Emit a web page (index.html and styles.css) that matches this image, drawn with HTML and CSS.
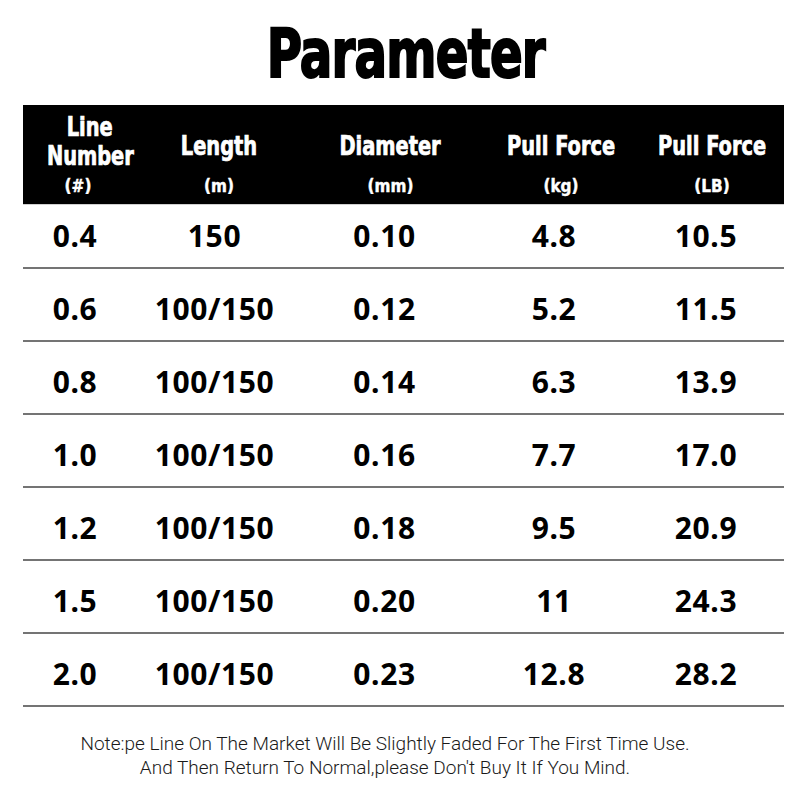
FILE: index.html
```html
<!DOCTYPE html>
<html>
<head>
<meta charset="utf-8">
<link rel="stylesheet" href="styles.css">
</head>
<body>
<div class="page">
  <div class="title-wrap"><h1 class="title">Parameter</h1></div>
  <div class="table">
    <div class="thead">
      <div class="th th1">
        <span class="hl">Line</span>
        <span class="hl hl-mid">Number</span>
        <span class="unit unit1">(#)</span>
      </div>
      <div class="th th2"><span class="hl hl-solo">Length</span><span class="unit">(m)</span></div>
      <div class="th th3"><span class="hl hl-solo">Diameter</span><span class="unit">(mm)</span></div>
      <div class="th th4"><span class="hl hl-solo">Pull Force</span><span class="unit">(kg)</span></div>
      <div class="th th5"><span class="hl hl-solo">Pull Force</span><span class="unit">(LB)</span></div>
    </div>
    <div class="row first"><span>0.4</span><span>150</span><span>0.10</span><span>4.8</span><span>10.5</span></div>
    <div class="row"><span>0.6</span><span>100/150</span><span>0.12</span><span>5.2</span><span>11.5</span></div>
    <div class="row"><span>0.8</span><span>100/150</span><span>0.14</span><span>6.3</span><span>13.9</span></div>
    <div class="row"><span>1.0</span><span>100/150</span><span>0.16</span><span>7.7</span><span>17.0</span></div>
    <div class="row"><span>1.2</span><span>100/150</span><span>0.18</span><span>9.5</span><span>20.9</span></div>
    <div class="row"><span>1.5</span><span>100/150</span><span>0.20</span><span>11</span><span>24.3</span></div>
    <div class="row"><span>2.0</span><span>100/150</span><span>0.23</span><span>12.8</span><span>28.2</span></div>
  </div>
  <div class="note">
    <p>Note:pe Line On The Market Will Be Slightly Faded For The First Time Use.</p>
    <p>And Then Return To Normal,please Don't Buy It If You Mind.</p>
  </div>
</div>
</body>
</html>
```

FILE: styles.css
```css
html, body {
  margin: 0;
  padding: 0;
  background: #fff;
}
.page {
  width: 800px;
  height: 800px;
  overflow: hidden;
  color: #000;
}
.title-wrap {
  padding-top: 21px;
  padding-bottom: 17px;
  text-align: center;
}
.title {
  margin: 0;
  display: inline-block;
  font-family: "DejaVu Sans Condensed", "DejaVu Sans", sans-serif;
  font-weight: 700;
  font-size: 67px;
  line-height: 67px;
  letter-spacing: -1px;
  -webkit-text-stroke: 2px #000;
  transform: scaleX(0.8);
  margin-left: 12px;
}
.table {
  margin-left: 23px;
  width: 761px;
}
.thead {
  background: #000;
  color: #fff;
  height: 99px;
  display: grid;
  grid-template-columns: 134px 124px 219px 122px 162px;
  border-bottom: 1px solid #d0d0d0;
}
.th {
  display: flex;
  flex-direction: column;
  justify-content: flex-end;
  align-items: center;
  padding-bottom: 7px;
  font-family: "DejaVu Sans Condensed", "DejaVu Sans", sans-serif;
  font-weight: 700;
}
.th5 {
  padding-left: 18px;
}
.hl {
  display: block;
  font-size: 26px;
  line-height: 29px;
  -webkit-text-stroke: 0.7px #fff;
  transform: scaleX(0.83);
  white-space: nowrap;
}
.hl-mid {
  margin-bottom: 4px;
}
.hl-solo {
  margin-bottom: 14px;
}
.unit {
  display: block;
  font-size: 17px;
  line-height: 22px;
  -webkit-text-stroke: 0.4px #fff;
  white-space: nowrap;
}
.unit1 {
  padding-right: 24px;
}
.row {
  display: grid;
  grid-template-columns: 104px 175px 165px 174px 130px;
  padding: 25px 13px 16px 0;
  border-bottom: 2px solid #747474;
  font-family: "Noto Sans", "Open Sans", sans-serif;
  font-weight: 700;
  font-size: 30px;
  line-height: 30px;
  letter-spacing: 0.6px;
  text-align: center;
}
.row.first {
  padding-top: 16px;
}
.note {
  margin-top: 25px;
  padding-right: 30px;
  text-align: center;
  font-family: Roboto, "Liberation Sans", sans-serif;
  font-weight: 300;
  font-size: 19px;
  line-height: 24px;
  color: #1a1a1a;
}
.note p {
  margin: 0;
}
```
